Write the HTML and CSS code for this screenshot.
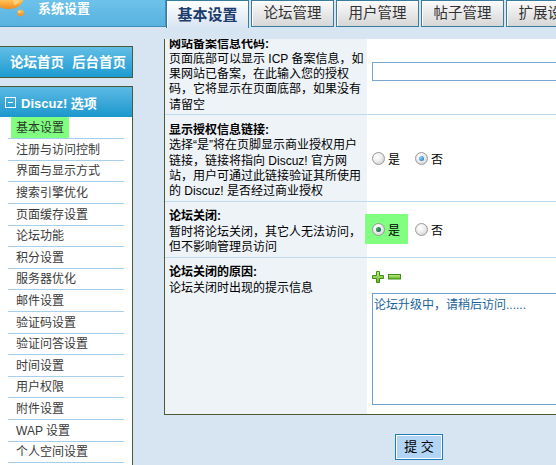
FILE: index.html
```html
<!DOCTYPE html>
<html lang="zh-CN">
<head>
<meta charset="utf-8">
<title>系统设置</title>
<link rel="stylesheet" href="styles.css">
</head>
<body>
<div class="top">
  <div class="brand">
    <svg class="logo" width="36" height="20" viewBox="0 0 36 20">
      <defs>
        <linearGradient id="og" x1="0" y1="0" x2="0" y2="1">
          <stop offset="0" stop-color="#ffc45a"/>
          <stop offset="1" stop-color="#f08a1c"/>
        </linearGradient>
      </defs>
      <path d="M0 0 H23 C22 5 17 9 9 9 C5 9 2 8 0 7 Z" fill="url(#og)"/>
      <path d="M13 0 H20 C19 3 17 5 14 5 Z" fill="#ffd986" opacity="0.7"/>
      <circle cx="20.5" cy="13" r="3.3" fill="url(#og)"/>
      <circle cx="19.6" cy="12" r="1.1" fill="#ffe2a0"/>
    </svg>
    <span class="brand-t">系统设置</span>
  </div>
  <div class="tabs">
    <div class="tab on">基本设置</div>
    <div class="tab">论坛管理</div>
    <div class="tab">用户管理</div>
    <div class="tab">帖子管理</div>
    <div class="tab">扩展设置</div>
  </div>
</div>
<div class="main">
  <div class="side">
    <div class="home"><span>论坛首页</span><span>后台首页</span></div>
    <div class="menu">
      <div class="mhead"><span class="box"></span>Discuz! 选项</div>
      <ul class="mlist">
        <li class="cur"><span>基本设置</span></li>
        <li>注册与访问控制</li>
        <li>界面与显示方式</li>
        <li>搜索引擎优化</li>
        <li>页面缓存设置</li>
        <li>论坛功能</li>
        <li>积分设置</li>
        <li>服务器优化</li>
        <li>邮件设置</li>
        <li>验证码设置</li>
        <li>验证问答设置</li>
        <li>时间设置</li>
        <li>用户权限</li>
        <li>附件设置</li>
        <li>WAP 设置</li>
        <li>个人空间设置</li>
        <li>其他设置</li>
      </ul>
    </div>
  </div>
  <div class="content">
    <div class="pane">
      <div class="tbl">
        <div class="row">
          <div class="l"><b>网站备案信息代码:</b>页面底部可以显示 ICP 备案信息，如果网站已备案，在此输入您的授权码，它将显示在页面底部，如果没有请留空</div>
          <div class="r"><div class="inp"></div></div>
        </div>
        <div class="row">
          <div class="l"><b>显示授权信息链接:</b>选择“是”将在页脚显示商业授权用户链接，链接将指向 Discuz! 官方网站，用户可通过此链接验证其所使用的 Discuz! 是否经过商业授权</div>
          <div class="r">
            <label class="opt"><span class="rd"></span>是</label>
            <label class="opt"><span class="rd on"></span>否</label>
          </div>
        </div>
        <div class="row">
          <div class="l"><b>论坛关闭:</b>暂时将论坛关闭，其它人无法访问，但不影响管理员访问</div>
          <div class="r">
            <label class="opt hl"><span class="rd on g"></span>是</label>
            <label class="opt"><span class="rd"></span>否</label>
          </div>
        </div>
        <div class="row">
          <div class="l"><b>论坛关闭的原因:</b>论坛关闭时出现的提示信息</div>
          <div class="r col">
            <svg class="pm" width="29" height="12" viewBox="0 0 29 12">
              <defs>
                <linearGradient id="gg" x1="0" y1="0" x2="0" y2="1">
                  <stop offset="0" stop-color="#c4f08a"/>
                  <stop offset="1" stop-color="#5eb322"/>
                </linearGradient>
              </defs>
              <path d="M4.5 0.5 H7.5 V4.5 H11.5 V7.5 H7.5 V11.5 H4.5 V7.5 H0.5 V4.5 H4.5 Z" fill="url(#gg)" stroke="#3f8f17"/>
              <rect x="16.5" y="3.5" width="12" height="4.5" fill="url(#gg)" stroke="#3f8f17"/>
            </svg>
            <div class="ta">论坛升级中，请稍后访问......</div>
          </div>
        </div>
      </div>
    </div>
    <div class="act"><button class="btn" type="button">提 交</button></div>
  </div>
</div>
</body>
</html>
```

FILE: styles.css
```css
* { box-sizing: border-box; }
html, body { margin: 0; padding: 0; overflow: hidden; }
body {
  width: 556px;
  height: 465px;
  background: #d7e4f2;
  font-family: "Liberation Sans", "Noto Sans CJK SC", sans-serif;
  font-size: 12px;
  color: #000;
}

/* top bar */
.top { display: flex; align-items: flex-start; height: 28px; }
.brand {
  width: 166px;
  height: 27px;
  flex: none;
  display: flex;
  align-items: flex-start;
  background: linear-gradient(#6cc2ea, #58b2de);
  border-right: 1px solid #3f8ebd;
  border-bottom: 1px solid #3f8ebd;
}
.logo { flex: none; display: block; }
.brand-t {
  margin-left: 2px;
  padding-top: 1px;
  color: #fff;
  font-weight: bold;
  font-size: 13px;
  line-height: 16px;
}
.tabs { display: flex; gap: 2px; }
.tab {
  flex: none;
  width: 83px;
  height: 27px;
  border: 1px solid #3a7c9e;
  background: linear-gradient(#fbfbfb, #d6d6d6);
  box-shadow: inset 1px 1px 0 #fff;
  text-align: center;
  line-height: 25px;
  font-size: 14.5px;
  color: #333;
  white-space: nowrap;
  overflow: hidden;
}
.tab.on {
  height: 28px;
  border-bottom: none;
  background: linear-gradient(#ffffff, #d7e4f2);
  color: #1b3d6e;
  font-weight: bold;
  font-size: 15px;
  line-height: 27px;
}

/* layout */
.main { display: flex; align-items: flex-start; }
.side { width: 133px; flex: none; padding-top: 18px; }
.home {
  height: 32px;
  border: 1px solid #4d5b34;
  border-left: none;
  background: linear-gradient(#62bee6, #1d9ad0);
  color: #fff;
  font-weight: bold;
  font-size: 13.5px;
  line-height: 30px;
  padding: 1px 0 0 10px;
  display: flex;
  gap: 8px;
}
.menu { margin-top: 8px; }
.mhead {
  height: 31px;
  border-top: 1px solid #4d5b34;
  border-right: 1px solid #4d5b34;
  background: linear-gradient(#5cbae5, #1b97cc);
  color: #fff;
  font-weight: bold;
  font-size: 13px;
  display: flex;
  align-items: center;
  padding-left: 5px;
}
.box {
  width: 11px;
  height: 11px;
  border: 1px solid #fff;
  margin-right: 5px;
  display: flex;
  align-items: center;
  justify-content: center;
}
.box::after { content: ""; width: 5px; height: 1px; background: #fff; }
.mlist {
  list-style: none;
  margin: 0;
  padding: 0;
  background: #fff;
  border-right: 1px solid #4d5b34;
}
.mlist li {
  margin: 0 8px;
  height: 21.6px;
  padding: 1.5px 0 0 8px;
  line-height: 19.1px;
  border-bottom: 1px solid #a6cfec;
  color: #3a3a3a;
  white-space: nowrap;
}
.mlist li.cur { height: 22.3px; padding: 0 0 0 3px; line-height: 21.3px; }
.mlist li.cur span {
  display: inline-block;
  vertical-align: top;
  height: 21.3px;
  padding: 2px 5px 0;
  line-height: 19.3px;
  background: #80ff80;
  color: #2c3a2c;
}

/* content table */
.content { flex: 1; min-width: 0; margin-left: 31px; padding-top: 11px; }
.pane {
  width: 600px;
  border-left: 1px solid #4d5b34;
  border-bottom: 1px solid #4d5b34;
  overflow: hidden;
}
.tbl { margin-top: -11px; }
.row { display: flex; border-top: 1px solid #bcdaf0; }
.l {
  width: 202px;
  flex: none;
  padding: 7.5px 0 1.5px 4px;
  background: #eef3f8;
  line-height: 15.3px;
}
.l b { display: block; }
.r {
  flex: 1;
  display: flex;
  align-items: center;
  padding-left: 5px;
  background: #fff;
}
.r.col {
  flex-direction: column;
  align-items: flex-start;
  padding: 13px 0 9px 5px;
}
.inp { width: 300px; height: 19px; border: 1px solid #7ba7d3; background: #fff; }
.opt {
  display: inline-flex;
  align-items: center;
  gap: 3px;
  height: 30px;
  padding: 0 8px 0 7px;
}
.opt:first-child { margin-left: -7px; }
.opt.hl { background: #80ff80; }
.rd {
  width: 13px;
  height: 13px;
  border-radius: 50%;
  border: 1px solid #9a9a9a;
  background: radial-gradient(circle at 40% 35%, #ffffff 0%, #f0f0f0 40%, #c6c6c6 100%);
  display: flex;
  align-items: center;
  justify-content: center;
}
.rd.on::after {
  content: "";
  width: 5px;
  height: 5px;
  border-radius: 50%;
  background: radial-gradient(circle at 35% 35%, #8fd8ff, #0c5fae);
}
.rd.on.g::after { background: radial-gradient(circle at 35% 35%, #3fb07a, #0a4a30); }
.pm { display: block; }
.ta {
  width: 300px;
  height: 112px;
  margin-top: 10px;
  border: 1px solid #6f9fcf;
  padding: 3px 1px 1px;
  line-height: 16px;
  color: #16649a;
  background: #fff;
}

/* submit */
.act { padding: 19px 0 0 231px; }
.btn {
  display: block;
  width: 48px;
  height: 26px;
  margin: 0;
  padding: 0;
  border: 1px solid #1e7db5;
  box-shadow: inset 0 0 0 1px #fff;
  background: #b2d5f5;
  font-family: "Liberation Sans", "Noto Sans CJK SC", sans-serif;
  font-size: 13px;
  line-height: 24px;
  color: #000;
  text-align: center;
}
```
